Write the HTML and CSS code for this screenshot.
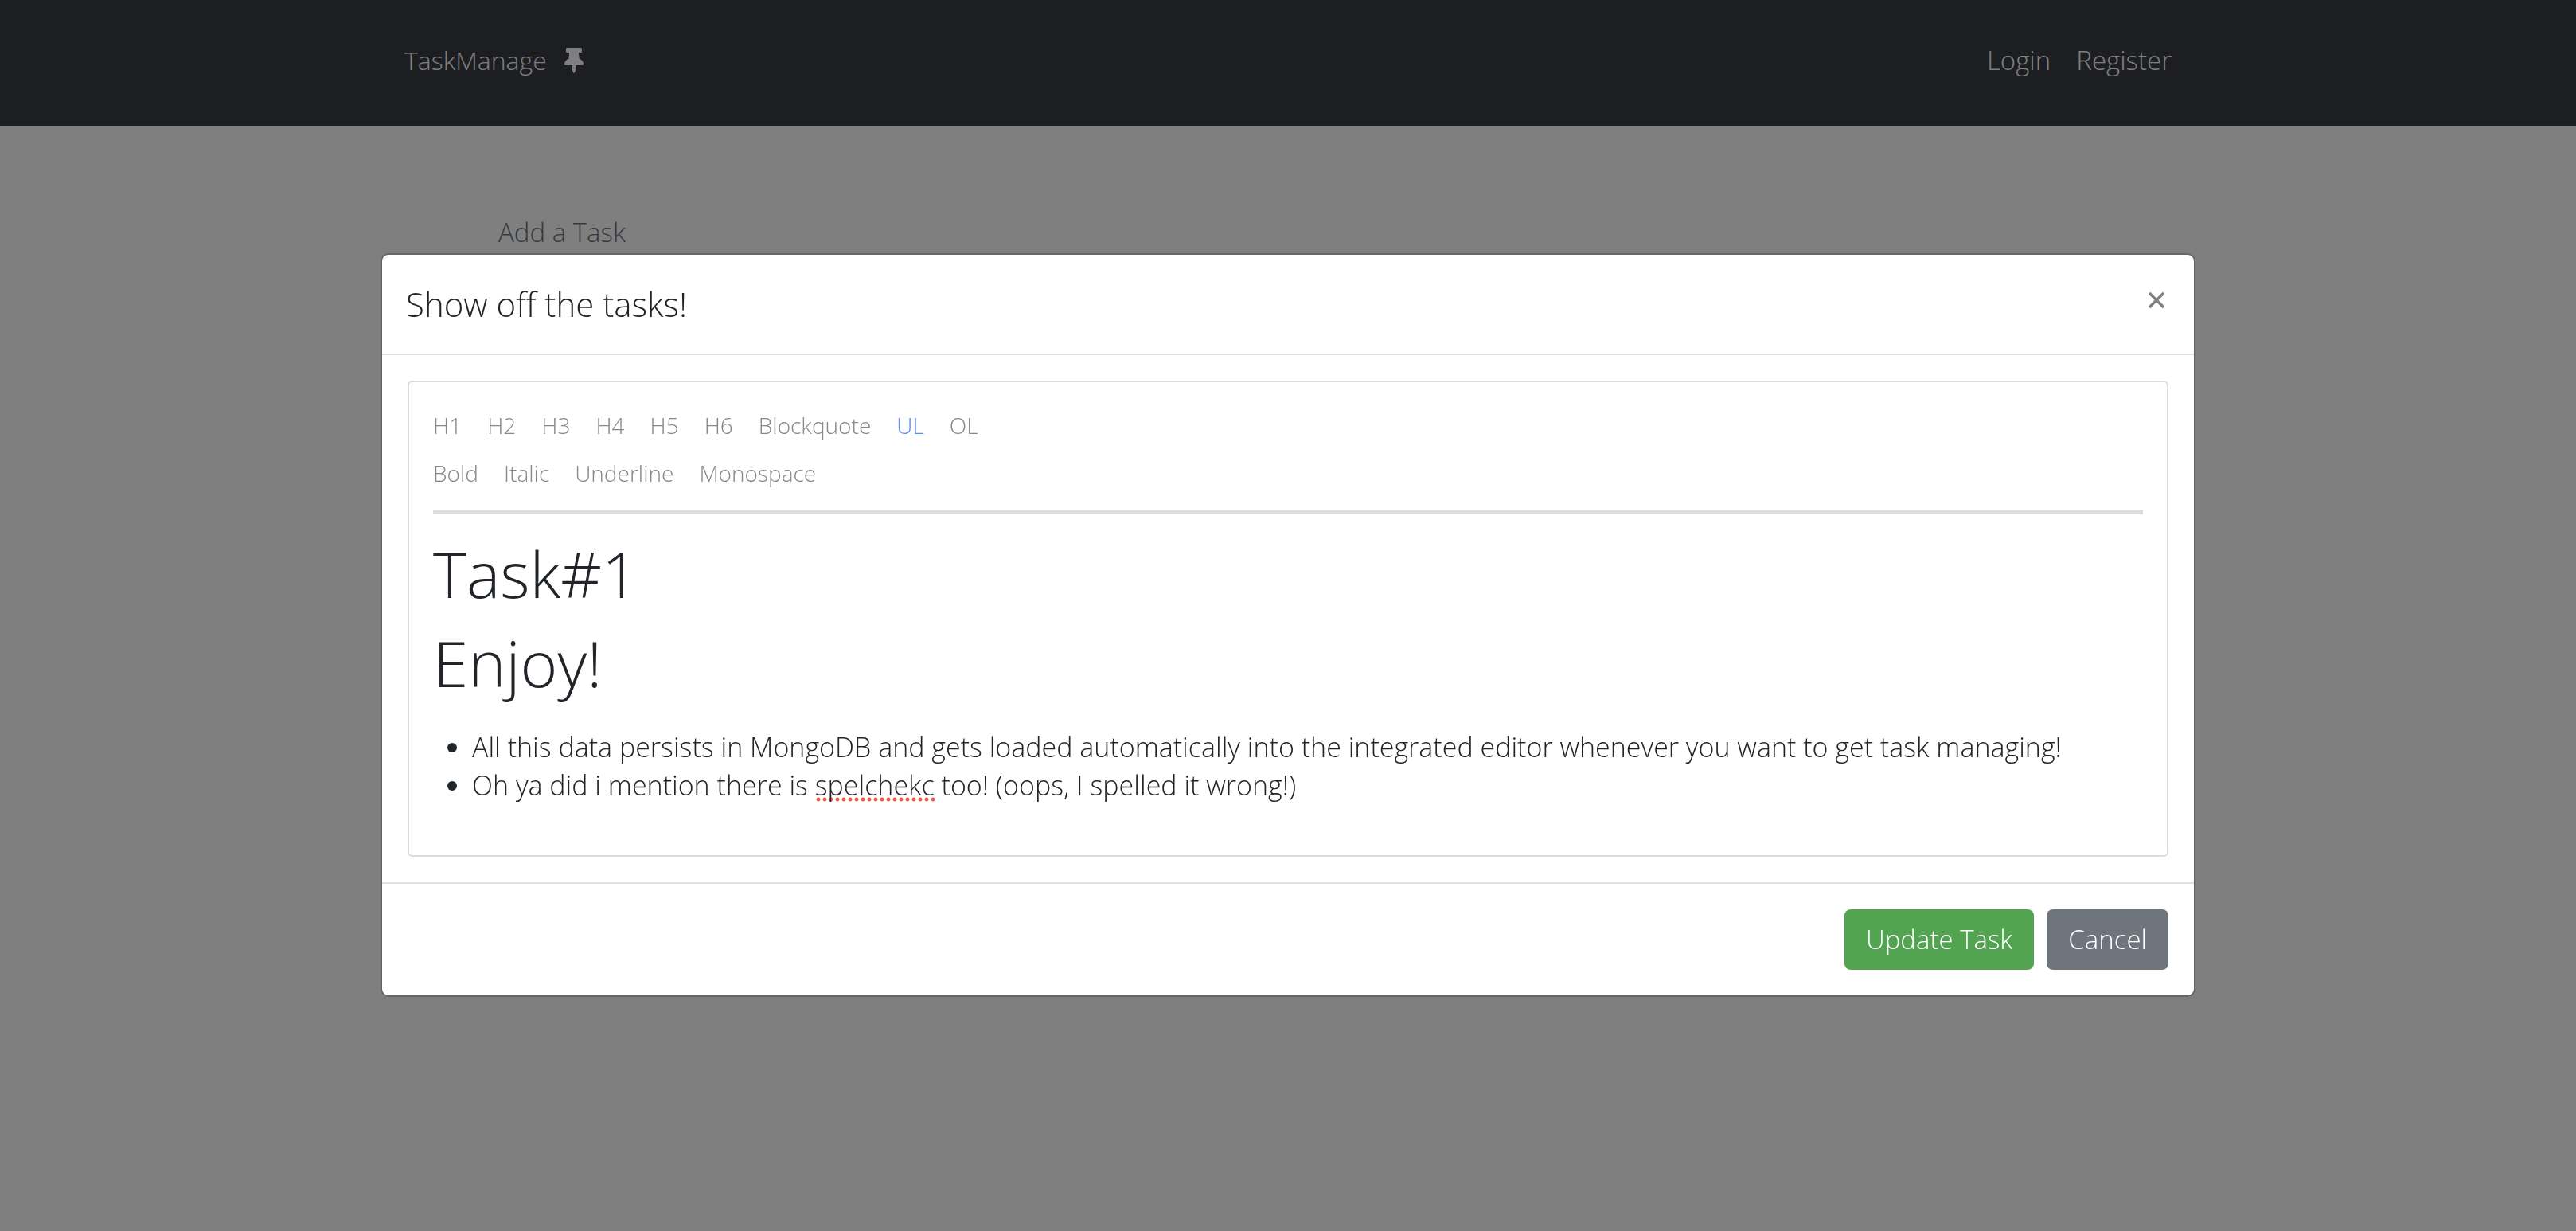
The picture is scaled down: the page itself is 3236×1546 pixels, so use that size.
FILE: index.html
```html
<!DOCTYPE html>
<html lang="en">
<head>
<meta charset="utf-8">
<meta name="viewport" content="width=device-width, initial-scale=1">
<title>TaskManage</title>
<link rel="stylesheet" href="styles.css">
</head>
<body>
<header class="navbar">
  <nav class="container navbar-inner">
    <a class="brand" href="#">TaskManage
      <svg class="brand-icon" viewBox="0 0 384 512" aria-hidden="true"><path fill="currentColor" d="M298.028 214.267L285.793 96H328c13.255 0 24-10.745 24-24V24c0-13.255-10.745-24-24-24H56C42.745 0 32 10.745 32 24v48c0 13.255 10.745 24 24 24h42.207L85.972 214.267C37.465 236.82 0 277.261 0 328c0 13.255 10.745 24 24 24h136v104.007c0 1.242.289 2.467.845 3.578l24 48c2.941 5.882 11.364 5.893 14.311 0l24-48a8.008 8.008 0 0 0 .845-3.578V352h136c13.255 0 24-10.745 24-24-.001-51.183-37.983-91.42-85.973-113.733z"/></svg>
    </a>
    <div class="nav-links">
      <a href="#">Login</a>
      <a href="#">Register</a>
    </div>
  </nav>
</header>
<main class="container page">
  <a class="add-task" href="#">Add a Task</a>
</main>

<div class="backdrop">
  <section class="modal" role="dialog" aria-modal="true" aria-labelledby="modal-title">
    <header class="modal-header">
      <h2 class="modal-title" id="modal-title">Show off the tasks!</h2>
      <button class="close" type="button" aria-label="Close">
        <svg class="close-icon" viewBox="0 0 22 22" aria-hidden="true"><path d="M2 2L20 20M20 2L2 20" stroke="currentColor" stroke-width="3.4" fill="none"/></svg>
      </button>
    </header>
    <div class="modal-body">
      <div class="editor">
        <div class="toolbar">
          <div class="tool-row">
            <button type="button">H1</button>
            <button type="button">H2</button>
            <button type="button">H3</button>
            <button type="button">H4</button>
            <button type="button">H5</button>
            <button type="button">H6</button>
            <button type="button">Blockquote</button>
            <button type="button" class="active">UL</button>
            <button type="button">OL</button>
          </div>
          <div class="tool-row">
            <button type="button">Bold</button>
            <button type="button">Italic</button>
            <button type="button">Underline</button>
            <button type="button">Monospace</button>
          </div>
        </div>
        <div class="document">
          <h1>Task#1</h1>
          <h1>Enjoy!</h1>
          <ul>
            <li>All this data persists in MongoDB and gets loaded automatically into the integrated editor whenever you want to get task managing!</li>
            <li>Oh ya did i mention there is <span class="misspelled">spelchekc</span> too! (oops, I spelled it wrong!)</li>
          </ul>
        </div>
      </div>
    </div>
    <footer class="modal-footer">
      <button class="btn btn-success" type="button">Update Task</button>
      <button class="btn btn-secondary" type="button">Cancel</button>
    </footer>
  </section>
</div>
</body>
</html>
```
FILE: styles.css
```css
* {
  box-sizing: border-box;
}

body {
  margin: 0;
  background: #fff;
  color: #212529;
  font-family: "Open Sans", "Noto Sans", sans-serif;
  font-size: 33px;
  font-weight: 300;
  line-height: 48px;
}

h1,
h2,
ul {
  margin: 0;
  font-weight: 300;
}

a {
  color: inherit;
  text-decoration: none;
}

button {
  border: 0;
  padding: 0;
  background: none;
  color: inherit;
  font: inherit;
  cursor: pointer;
}

.container {
  width: 100%;
  max-width: 2280px;
  margin: 0 auto;
  padding: 0 30px;
}

/* Navigation */
.navbar {
  padding: 52px 0 58px;
  background: #3a3c42;
  color: #fff;
}

.navbar-inner,
.brand,
.nav-links {
  display: flex;
  align-items: flex-start;
}

.navbar-inner {
  justify-content: space-between;
}

.brand {
  gap: 22px;
  font-size: 32px;
}

.brand-icon {
  width: 24px;
  height: 32px;
  margin-top: 8px;
}

.nav-links {
  gap: 32px;
}

.page {
  padding: 110px 148px;
}

.add-task {
  color: #6c757d;
}

/* Modal */
.backdrop {
  position: fixed;
  inset: 0;
  overflow: auto;
  padding-top: 318px;
  background: rgba(0, 0, 0, 0.5);
}

.modal {
  max-width: 2280px;
  margin: 0 auto;
  border: 2px solid rgba(0, 0, 0, 0.2);
  border-radius: 10px;
  background: #fff;
  background-clip: padding-box;
}

.modal-header {
  display: flex;
  justify-content: space-between;
  align-items: flex-start;
  padding: 34px 30px;
  border-bottom: 2px solid #dee2e6;
}

.modal-title {
  font-size: 42px;
  line-height: 56px;
}

.close {
  display: flex;
  padding: 12px 6px;
  color: #7f7f7f;
}

.close-icon {
  width: 22px;
  height: 22px;
}

.modal-body {
  padding: 32px;
}

.editor {
  padding: 34px 30px 64px;
  border: 2px solid #ddd;
  border-radius: 6px;
}

.toolbar {
  display: flex;
  flex-direction: column;
  gap: 20px;
  padding-bottom: 26px;
  border-bottom: 6px solid #ddd;
  color: #888;
  font-size: 28px;
  line-height: 40px;
}

.tool-row {
  display: flex;
  flex-wrap: wrap;
  gap: 32px;
}

.active {
  color: #5890ff;
}

.document {
  display: flex;
  flex-direction: column;
  gap: 16px;
  padding-top: 26px;
}

.document h1 {
  font-size: 80px;
  line-height: 96px;
}

.document ul {
  margin-top: 18px;
  padding-left: 49px;
  font-size: 34px;
}

.misspelled {
  background: radial-gradient(circle, #ee5d50 0 2px, transparent 3px) 0 calc(100% - 2px) / 8px 6px repeat-x;
}

.modal-footer {
  display: flex;
  justify-content: flex-end;
  gap: 16px;
  padding: 32px;
  border-top: 2px solid #dee2e6;
}

.btn {
  padding: 14px 27px;
  border-radius: 8px;
  color: #fff;
}

.btn-success {
  background: #53a451;
}

.btn-secondary {
  background: #6e757c;
}
```
